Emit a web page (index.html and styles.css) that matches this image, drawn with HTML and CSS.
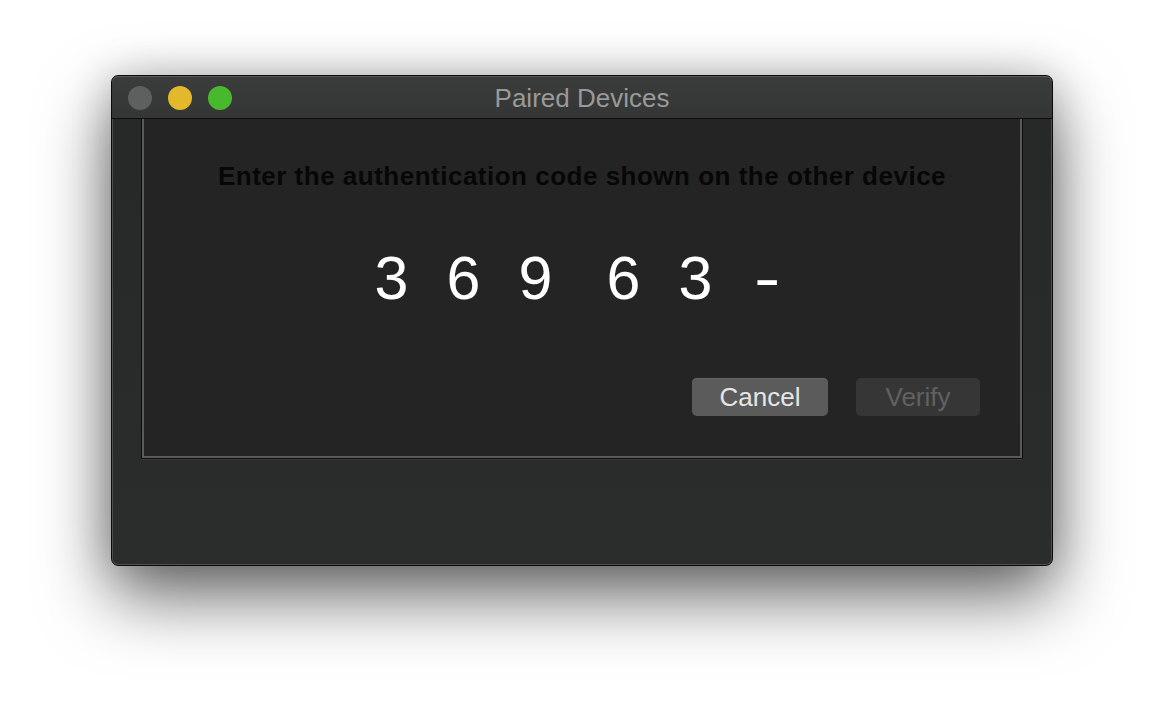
FILE: index.html
```html
<!DOCTYPE html>
<html>
<head>
<meta charset="utf-8">
<link rel="stylesheet" href="styles.css">
</head>
<body>
<div class="window">
  <div class="titlebar">
    <div class="lights">
      <span class="light gray"></span>
      <span class="light yellow"></span>
      <span class="light green"></span>
    </div>
    <div class="title">Paired Devices</div>
  </div>
  <div class="content">
    <div class="sheet">
      <h1 class="prompt">Enter the authentication code shown on the other device</h1>
      <div class="code">
        <span class="digit">3</span><span class="digit">6</span><span class="digit">9</span>
        <span class="sep"></span>
        <span class="digit">6</span><span class="digit">3</span><span class="digit"><span class="dash">-</span></span>
      </div>
      <div class="actions">
        <button class="btn cancel">Cancel</button>
        <button class="btn verify" disabled>Verify</button>
      </div>
    </div>
  </div>
</div>
</body>
</html>
```
FILE: styles.css
```css
html, body {
  margin: 0;
  padding: 0;
  background: #ffffff;
}
body {
  width: 1164px;
  height: 714px;
  padding: 75px 0 0 111px;
  box-sizing: border-box;
  font-family: "Liberation Sans", Arial, sans-serif;
  overflow: hidden;
}
.window {
  width: 942px;
  height: 491px;
  box-sizing: border-box;
  border: 1px solid #0b0b0b;
  border-radius: 7px;
  background: linear-gradient(#262727, #2b2c2c);
  box-shadow: inset 0 0 0 1px #4e4e4e, 0 30px 70px rgba(0,0,0,0.6), 0 0 40px rgba(0,0,0,0.18);
  display: flex;
  flex-direction: column;
  overflow: hidden;
}
.titlebar {
  position: relative;
  height: 42px;
  flex: none;
  border-bottom: 1px solid #0e0e0e;
  background: linear-gradient(#3b3c3c, #343535);
  border-radius: 6px 6px 0 0;
  box-shadow: inset 0 1px 0 #5a5a5a;
  display: flex;
  align-items: center;
  justify-content: center;
}
.lights {
  position: absolute;
  left: 16px;
  top: 10px;
  display: flex;
  gap: 16px;
}
.light {
  width: 24px;
  height: 24px;
  border-radius: 50%;
  display: block;
}
.light.gray { background: #5e5f5f; }
.light.yellow { background: #e3b82b; }
.light.green { background: #48b92c; }
.title {
  color: #9a9a9a;
  font-size: 26px;
  padding-top: 3px;
}
.content {
  padding: 0 29px;
  flex: 1;
}
.sheet {
  width: 882px;
  height: 340px;
  box-sizing: border-box;
  border: 1px solid #0d0d0d;
  border-top: none;
  background: #242424;
  box-shadow: inset 2px 0 0 #5a5a5a, inset -2px 0 0 #5a5a5a, inset 0 -2px 0 #5a5a5a, 0 1px 0 #3a3a3a;
  display: flex;
  flex-direction: column;
  align-items: center;
}
.prompt {
  margin: 42px 0 0 0;
  font-size: 26px;
  letter-spacing: 0.5px;
  font-weight: bold;
  color: #070707;
  line-height: 30px;
}
.code {
  margin-top: 52px;
  margin-left: -5px;
  display: flex;
  align-items: center;
  color: #ffffff;
  font-size: 61px;
  line-height: 70px;
  font-family: "Liberation Sans", Arial, sans-serif;
}
.digit {
  width: 72px;
  text-align: center;
}
.dash {
  display: inline-block;
  transform: scaleX(1.3);
}
.sep {
  width: 16px;
}
.actions {
  align-self: flex-end;
  margin: 65px 42px 0 0;
  display: flex;
  gap: 28px;
}
.btn {
  height: 38px;
  border: none;
  border-radius: 5px;
  font-family: "Liberation Sans", Arial, sans-serif;
  font-size: 26px;
  padding: 0;
  line-height: 38px;
}
.cancel {
  width: 136px;
  background: #5b5b5b;
  color: #e6e6e6;
  box-shadow: inset 0 1px 0 #666;
}
.verify {
  width: 124px;
  background: #363636;
  color: #616161;
}
```
